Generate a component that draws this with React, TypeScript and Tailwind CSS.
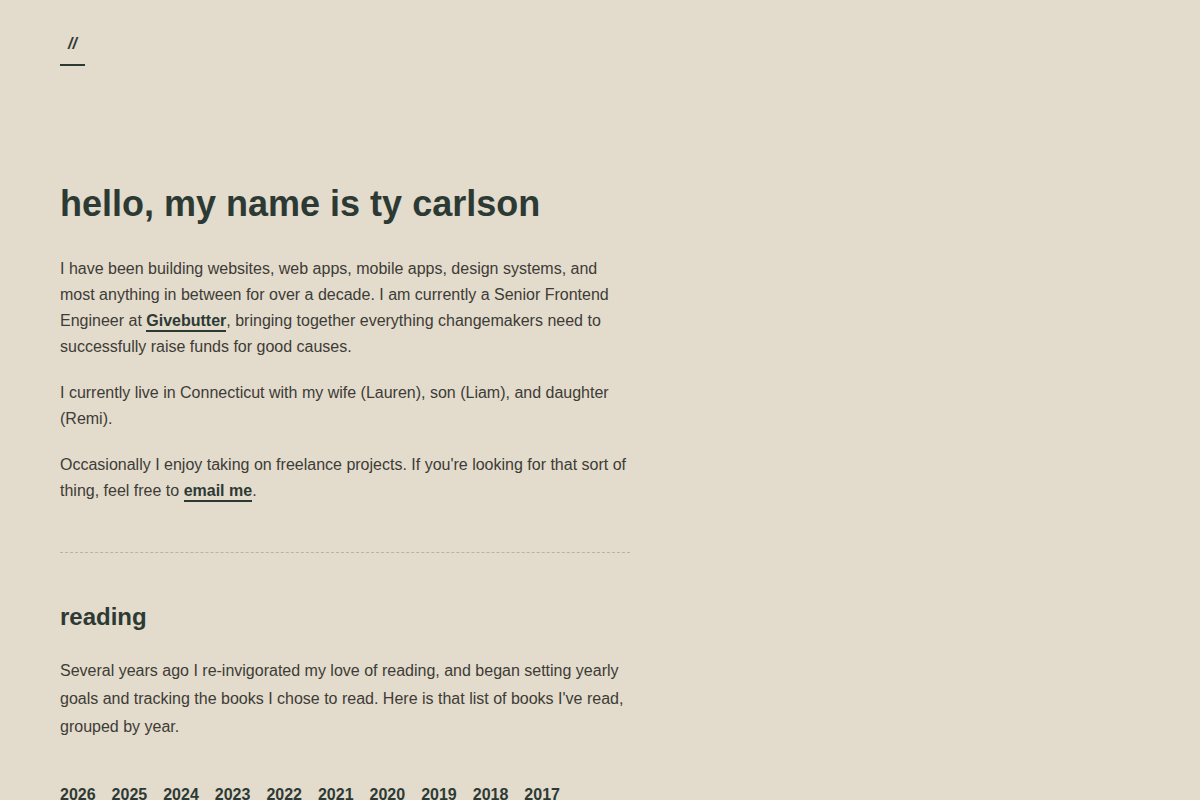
import React from 'react';

const years = ['2026', '2025', '2024', '2023', '2022', '2021', '2020', '2019', '2018', '2017'];

const InlineLink: React.FC<{ children: React.ReactNode }> = ({ children }) => (
  <a href="#" className="font-bold text-[#2d3a34] border-b-2 border-[#2d3a34] pb-[1px]">
    {children}
  </a>
);

const App: React.FC = () => {
  return (
    <div className="min-h-screen bg-[#e3dbcc] text-[#3d3c36] font-['Liberation_Sans',Arial,sans-serif]">
      <div className="px-[60px]">
        {/* site mark */}
        <header className="pt-8">
          <a
            href="#"
            className="inline-block px-2 pb-2 border-b-2 border-[#2d3a34] text-base leading-6 font-bold italic text-[#2d3a34]"
          >
            //
          </a>
        </header>

        <main className="w-[570px]">
          <section className="mt-[116px]">
            <h1 className="text-[36px] leading-[43px] font-bold text-[#2d3a34] mb-[31px]">
              hello, my name is ty carlson
            </h1>
            <div className="flex flex-col gap-5 text-base leading-[26px]">
              <p>
                I have been building websites, web apps, mobile apps, design systems, and most anything in
                between for over a decade. I am currently a Senior Frontend Engineer at{' '}
                <InlineLink>Givebutter</InlineLink>, bringing together everything changemakers need to
                successfully raise funds for good causes.
              </p>
              <p>I currently live in Connecticut with my wife (Lauren), son (Liam), and daughter (Remi).</p>
              <p>
                Occasionally I enjoy taking on freelance projects. If you're looking for that sort of thing,
                feel free to <InlineLink>email me</InlineLink>.
              </p>
            </div>
          </section>

          <hr className="mt-12 mb-[49px] border-0 border-t border-dashed border-[#b9b2a5]" />

          <section>
            <h2 className="text-2xl leading-[29px] font-bold text-[#2d3a34] mb-[26px]">reading</h2>
            <p className="text-base leading-7">
              Several years ago I re-invigorated my love of reading, and began setting yearly goals and
              tracking the books I chose to read. Here is that list of books I've read, grouped by year.
            </p>
            <nav className="mt-[42px] flex gap-4 text-base leading-6 font-bold text-[#2d3a34]">
              {years.map((y) => (
                <a key={y} href="#">
                  {y}
                </a>
              ))}
            </nav>
          </section>
        </main>
      </div>
    </div>
  );
};

export default App;
